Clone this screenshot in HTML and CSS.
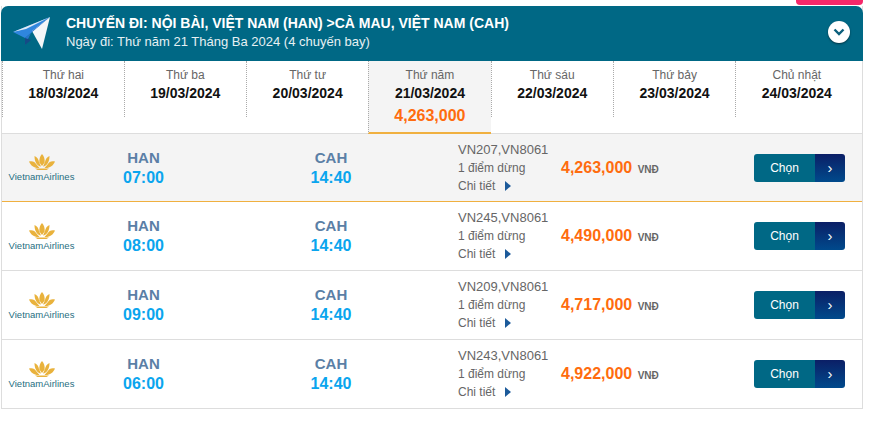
FILE: index.html
```html
<!DOCTYPE html>
<html lang="vi">
<head>
    <meta charset="UTF-8">
    <title>Chuyến đi</title>
    <link rel="stylesheet" href="styles.css">
</head>
<body>
    <svg width="0" height="0" class="defs">
        <symbol id="lotus" viewBox="0 0 26 16">
            <path fill="#e9b23c" d="M13 0c2 2 3 5 2.600 8.500L13 12l-2.600-3.500C10 5 11 2 13 0z"/>
            <path fill="#e9b23c" d="M5.500 2c2.500 1 4 3 4.500 6l2 4.500C8 12 5.500 8 5.500 2zM20.500 2c-2.500 1-4 3-4.500 6l-2 4.500c4-.5 6.500-4.500 6.500-10.500z"/>
            <path fill="#e9b23c" d="M0 7.500c3-1 6 0 7.500 3l3 3.500C5.500 14.500 2 12 0 7.500zM26 7.500c-3-1-6 0-7.500 3l-3 3.500c5 .5 8.500-2 10.500-6.500z"/>
            <path fill="#e9b23c" d="M6 14.500h14L17.500 16h-9z"/>
        </symbol>
    </svg>
    <div class="flag"></div>
    <div class="panel">
        <div class="head">
            <svg class="plane" width="37" height="33" viewBox="0 0 37 33">
                <polygon points="0,15 37,0 12,21" fill="#2f86de"/>
                <polygon points="0,15 37,0 13,12" fill="#dfeaf4"/>
                <polygon points="37,0 19,14 29,32" fill="#f4f6f8"/>
                <polygon points="37,0 12,21 12,28 19,14" fill="#2a74cc"/>
                <polygon points="12,21 12,28 18,23" fill="#164a86"/>
            </svg>
            <div class="head-text">
                <div class="head-title">CHUYẾN ĐI: NỘI BÀI, VIỆT NAM (HAN) &gt;CÀ MAU, VIỆT NAM (CAH)</div>
                <div class="head-sub">Ngày đi: Thứ năm 21 Tháng Ba 2024 (4 chuyến bay)</div>
            </div>
            <div class="toggle">
                <svg width="12" height="8" viewBox="0 0 12 8"><path d="M1.500 1.500 6 6l4.500-4.500" fill="none" stroke="#0b5f7c" stroke-width="2.400"/></svg>
            </div>
        </div>

        <div class="days">
            <div class="day"><div class="day-name">Thứ hai</div><div class="day-date">18/03/2024</div></div>
            <div class="day"><div class="day-name">Thứ ba</div><div class="day-date">19/03/2024</div></div>
            <div class="day"><div class="day-name">Thứ tư</div><div class="day-date">20/03/2024</div></div>
            <div class="day day-active"><div class="day-name">Thứ năm</div><div class="day-date">21/03/2024</div><div class="day-price">4,263,000</div></div>
            <div class="day"><div class="day-name">Thứ sáu</div><div class="day-date">22/03/2024</div></div>
            <div class="day"><div class="day-name">Thứ bảy</div><div class="day-date">23/03/2024</div></div>
            <div class="day"><div class="day-name">Chủ nhật</div><div class="day-date">24/03/2024</div></div>
        </div>

        <div class="row row-active">
            <div class="logo"><svg width="26" height="16"><use href="#lotus"/></svg><div class="logo-text">VietnamAirlines</div></div>
            <div class="place"><div class="code">HAN</div><div class="time">07:00</div></div>
            <div class="place"><div class="code">CAH</div><div class="time">14:40</div></div>
            <div class="info"><div class="flight">VN207,VN8061</div><div>1 điểm dừng</div><div>Chi tiết <span class="arrow"></span></div></div>
            <div class="price">4,263,000 <span class="cur">VNĐ</span></div>
            <div class="btn"><span class="btn-label">Chọn</span><span class="btn-go">›</span></div>
        </div>
        <div class="row">
            <div class="logo"><svg width="26" height="16"><use href="#lotus"/></svg><div class="logo-text">VietnamAirlines</div></div>
            <div class="place"><div class="code">HAN</div><div class="time">08:00</div></div>
            <div class="place"><div class="code">CAH</div><div class="time">14:40</div></div>
            <div class="info"><div class="flight">VN245,VN8061</div><div>1 điểm dừng</div><div>Chi tiết <span class="arrow"></span></div></div>
            <div class="price">4,490,000 <span class="cur">VNĐ</span></div>
            <div class="btn"><span class="btn-label">Chọn</span><span class="btn-go">›</span></div>
        </div>
        <div class="row">
            <div class="logo"><svg width="26" height="16"><use href="#lotus"/></svg><div class="logo-text">VietnamAirlines</div></div>
            <div class="place"><div class="code">HAN</div><div class="time">09:00</div></div>
            <div class="place"><div class="code">CAH</div><div class="time">14:40</div></div>
            <div class="info"><div class="flight">VN209,VN8061</div><div>1 điểm dừng</div><div>Chi tiết <span class="arrow"></span></div></div>
            <div class="price">4,717,000 <span class="cur">VNĐ</span></div>
            <div class="btn"><span class="btn-label">Chọn</span><span class="btn-go">›</span></div>
        </div>
        <div class="row">
            <div class="logo"><svg width="26" height="16"><use href="#lotus"/></svg><div class="logo-text">VietnamAirlines</div></div>
            <div class="place"><div class="code">HAN</div><div class="time">06:00</div></div>
            <div class="place"><div class="code">CAH</div><div class="time">14:40</div></div>
            <div class="info"><div class="flight">VN243,VN8061</div><div>1 điểm dừng</div><div>Chi tiết <span class="arrow"></span></div></div>
            <div class="price">4,922,000 <span class="cur">VNĐ</span></div>
            <div class="btn"><span class="btn-label">Chọn</span><span class="btn-go">›</span></div>
        </div>
    </div>
</body>
</html>
```

FILE: styles.css
```css
html, body {
    height: 100%;
}
body {
    margin: 0;
    font-family: "Liberation Sans", Arial, sans-serif;
    background-color: #fff;
    overflow: hidden;
}
.defs {
    display: block;
    height: 0;
}
.flag {
    width: 67px;
    height: 5px;
    margin-left: 796px;
    background-color: #f5286a;
    border-radius: 0 0 4px 4px;
}
.panel {
    width: 860px;
    margin: 1px 0 0 1px;
    border: 1px solid #ddd;
    border-width: 0 1px;
}
.head {
    display: flex;
    align-items: center;
    height: 55px;
    margin: 0 -1px;
    padding: 0 13px 0 12px;
    background-color: #006885;
    border-radius: 7px 7px 0 0;
    color: #fff;
}
.plane {
    flex: none;
    margin-right: 16px;
}
.head-text {
    flex: 1;
    margin-top: -2px;
}
.head-title {
    font-size: 14px;
    font-weight: bold;
    line-height: 18px;
}
.head-sub {
    font-size: 13px;
    line-height: 18px;
    margin-top: 1px;
    color: #e6f0f3;
}
.toggle {
    display: flex;
    align-items: center;
    justify-content: center;
    width: 22px;
    height: 22px;
    margin-top: -3px;
    border-radius: 50%;
    background-color: #fff;
    box-shadow: 0 1px 2px rgba(0, 0, 0, 0.5);
}
.days {
    display: grid;
    grid-template-columns: 121.7px repeat(6, 122.3px);
    height: 72px;
    border-bottom: 1px solid #ddd;
}
.day {
    height: 49px;
    padding-top: 7px;
    text-align: center;
    border-left: 1px dotted #aaa;
}
.day-name {
    font-size: 12px;
    line-height: 15px;
    color: #666;
}
.day-date {
    font-size: 14px;
    font-weight: bold;
    line-height: 18px;
    margin-top: 1px;
    color: #111;
}
.day-active {
    height: 64px;
    background-color: #f4f4f4;
    border-bottom: 2px solid #f0b040;
}
.day-price {
    font-size: 16px;
    font-weight: bold;
    line-height: 20px;
    margin-top: 4px;
    color: #ff6c0e;
}
.row {
    display: grid;
    grid-template-columns: 79px 125px 250px 105px 193px 91px;
    align-items: center;
    height: 68px;
    border-bottom: 1px solid #ddd;
    color: #666;
    font-size: 12px;
}
.row-active {
    height: 67px;
    background-color: #f4f4f4;
    border-bottom-color: #f0b040;
}
.logo {
    padding-top: 2px;
    text-align: center;
    line-height: 0;
}
.logo-text {
    font-size: 9.500px;
    line-height: 12px;
    color: #1f6f82;
    margin-top: 1px;
    white-space: nowrap;
}
.place {
    text-align: center;
}
.code {
    font-size: 15px;
    font-weight: bold;
    line-height: 20px;
    color: #5b7fa6;
}
.time {
    font-size: 16px;
    font-weight: bold;
    line-height: 20px;
    color: #0aa5ee;
}
.info {
    padding-left: 2px;
    line-height: 18px;
}
.flight {
    font-size: 13px;
}
.arrow {
    display: inline-block;
    margin-left: 6px;
    border-left: 6px solid #1c5a9a;
    border-top: 5px solid transparent;
    border-bottom: 5px solid transparent;
    vertical-align: -1px;
}
.price {
    font-size: 16px;
    font-weight: bold;
    color: #ff6c0e;
}
.cur {
    font-size: 10px;
    color: #666;
    margin-left: 1px;
}
.btn {
    display: flex;
    width: 91px;
    height: 28px;
    border-radius: 3px;
    overflow: hidden;
    color: #fff;
    line-height: 28px;
}
.btn-label {
    width: 61px;
    text-align: center;
    background-color: #006885;
}
.btn-go {
    width: 30px;
    text-align: center;
    font-size: 15px;
    background: linear-gradient(#0b1f66, #004a8c);
}
```
